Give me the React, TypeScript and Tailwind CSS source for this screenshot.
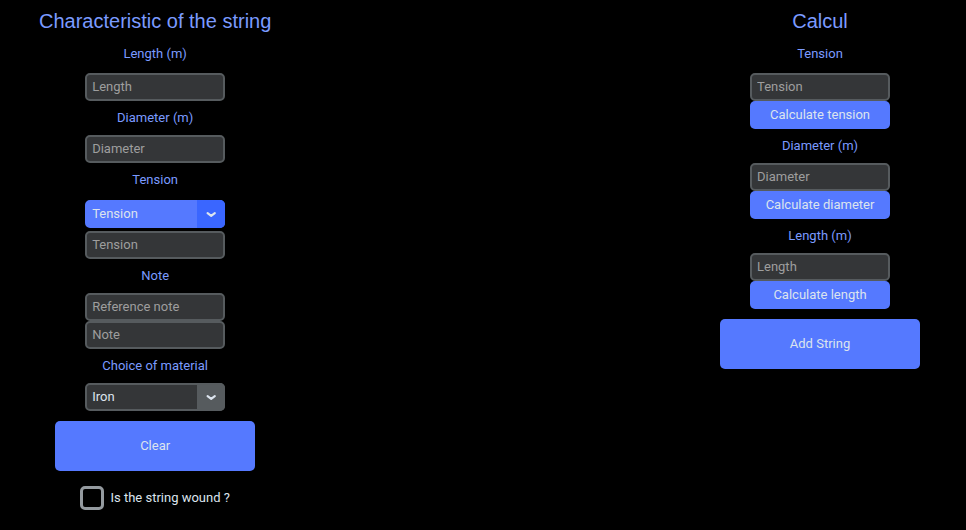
import { useId, type ReactNode } from "react";

function Title({ children }: { children: ReactNode }) {
  return <h1 className="flex h-10 items-center pt-0.5 font-['Liberation_Sans',Arial,sans-serif] text-xl text-[#7b9bff]">{children}</h1>;
}

function Label({ htmlFor, children }: { htmlFor: string; children: ReactNode }) {
  return (
    <label htmlFor={htmlFor} className="flex h-7 items-center text-[13px] leading-4 text-[#7b9bff]">
      {children}
    </label>
  );
}

function Entry({ id, placeholder }: { id?: string; placeholder: string }) {
  return (
    <input
      id={id}
      type="text"
      aria-label={id ? undefined : placeholder}
      placeholder={placeholder}
      className="block h-7 w-full rounded-[5px] border-2 border-[#565b5e] bg-[#343638] px-[5px] pb-0.5 text-[13px] leading-4 text-[#dce4ee] outline-none placeholder:text-[#9e9e9e]"
    />
  );
}

function Dropdown({ id, options, tone }: { id: string; options: string[]; tone: "blue" | "gray" }) {
  const blue = tone === "blue";
  return (
    <div className="relative w-full">
      <select
        id={id}
        className={`block h-7 w-full appearance-none rounded-[5px] border-2 px-[5px] text-[13px] leading-4 text-[#dce4ee] outline-none ${
          blue ? "border-[#5579ff] bg-[#5579ff]" : "border-[#565b5e] bg-[#343638]"
        }`}
      >
        {options.map((option) => (
          <option key={option}>{option}</option>
        ))}
      </select>
      <span
        className={`pointer-events-none absolute inset-y-0 right-0 flex w-7 items-center justify-center rounded-r-[5px] ${
          blue ? "bg-[#3a66ff]" : "bg-[#565b5e]"
        }`}
      >
        <svg width="12" height="8" viewBox="0 0 12 8" fill="none" aria-hidden="true">
          <path
            d="M2.6 3.2 L6.2 5.8 L9.8 3.2"
            stroke="#dce4ee"
            strokeWidth="2.2"
            strokeLinecap="round"
            strokeLinejoin="round"
          />
        </svg>
      </span>
    </div>
  );
}

function SmallButton({ children }: { children: ReactNode }) {
  return (
    <button type="button" className="h-7 w-full rounded-[5px] bg-[#5579ff] text-[13px] leading-4 text-[#dce4ee] hover:bg-[#3a66ff]">
      {children}
    </button>
  );
}

function LargeButton({ children }: { children: ReactNode }) {
  return (
    <button type="button" className="mt-2.5 h-[50px] w-[200px] rounded-[5px] bg-[#5579ff] text-[13px] leading-4 text-[#dce4ee] hover:bg-[#3a66ff]">
      {children}
    </button>
  );
}

function Group({ className, children }: { className?: string; children: ReactNode }) {
  return <div className={`flex w-[140px] flex-col items-center ${className ?? ""}`}>{children}</div>;
}

function Calculation({ label, placeholder, action, className }: { label: string; placeholder: string; action: string; className: string }) {
  const id = useId();
  return (
    <Group className={className}>
      <Label htmlFor={id}>{label}</Label>
      <Entry id={id} placeholder={placeholder} />
      <SmallButton>{action}</SmallButton>
    </Group>
  );
}

export default function App() {
  return (
    <main className="flex min-h-screen items-start justify-between bg-black font-['Roboto',sans-serif]">
      <section className="flex flex-col items-center px-[39px]">
        <Title>Characteristic of the string</Title>
        <Group className="gap-[5px]">
          <Label htmlFor="length">Length (m)</Label>
          <Entry id="length" placeholder="Length" />
        </Group>
        <Group className="mt-[3px] gap-[3px]">
          <Label htmlFor="diameter">Diameter (m)</Label>
          <Entry id="diameter" placeholder="Diameter" />
        </Group>
        <Group className="mt-[3px] gap-[3px]">
          <div className="pb-[3px]">
            <Label htmlFor="tension-kind">Tension</Label>
          </div>
          <Dropdown id="tension-kind" options={["Tension", "Note"]} tone="blue" />
          <Entry placeholder="Tension" />
        </Group>
        <Group className="mt-[3px]">
          <div className="pb-[3px]">
            <Label htmlFor="reference-note">Note</Label>
          </div>
          <Entry id="reference-note" placeholder="Reference note" />
          <Entry placeholder="Note" />
        </Group>
        <Group className="mt-[3px] gap-[3px]">
          <Label htmlFor="material">Choice of material</Label>
          <Dropdown id="material" options={["Iron", "Steel", "Nylon"]} tone="gray" />
        </Group>
        <LargeButton>Clear</LargeButton>
        <label className="mt-[15px] flex items-center gap-1.5 text-[13px] leading-4 text-[#dce4ee]">
          <input
            type="checkbox"
            className="size-6 appearance-none rounded-[5px] border-[3px] border-[#949a9f] checked:bg-[#5579ff]"
          />
          Is the string wound ?
        </label>
      </section>
      <section className="flex flex-col items-center pr-[46px]">
        <Title>Calcul</Title>
        <Calculation label="Tension" placeholder="Tension" action="Calculate tension" className="[&>input]:mt-[5px]" />
        <Calculation label="Diameter (m)" placeholder="Diameter" action="Calculate diameter" className="mt-[3px] [&>input]:mt-[3px]" />
        <Calculation label="Length (m)" placeholder="Length" action="Calculate length" className="mt-[3px] [&>input]:mt-[3px]" />
        <LargeButton>Add String</LargeButton>
      </section>
    </main>
  );
}
